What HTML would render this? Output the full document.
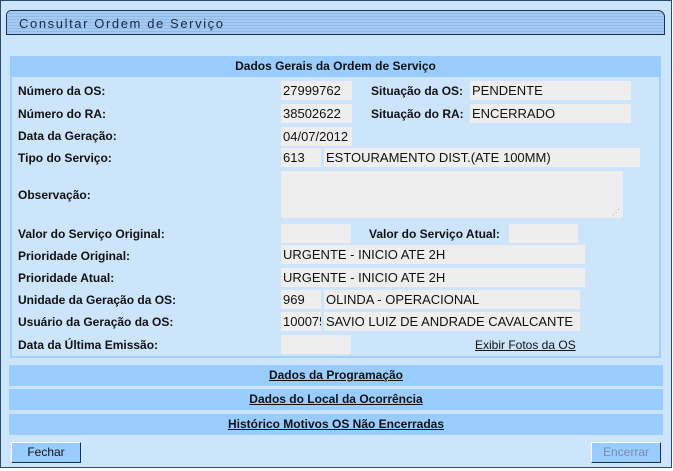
<!DOCTYPE html>
<html><head><meta charset="utf-8"><style>
*{margin:0;padding:0;box-sizing:border-box}
body{width:673px;height:471px;background:#fff;font-family:"Liberation Sans",Arial,sans-serif;position:relative;overflow:hidden}
.outer{position:absolute;left:0;top:0;width:672px;height:468px;background:#cce5fb;border:1px solid #2b4a6f}
.title{position:absolute;left:6px;top:10px;width:659px;height:25px;border:1px solid #1d2f4a;border-radius:5px 7px 0 0;
background:repeating-linear-gradient(#a6cbf2 0px,#a6cbf2 2px,#8fb9e8 2px,#8fb9e8 3px);}
.title span{position:absolute;left:12px;top:5px;font-size:13px;letter-spacing:1.6px;color:#1a2a40}
.sec{position:absolute;left:10px;top:56px;width:651px;height:302px;border:2px solid #a3d0fb;border-top:none}
.hdr{position:absolute;left:10px;top:56px;width:651px;height:21px;background:#99ccff;text-align:center;font-size:12px;font-weight:bold;line-height:21px;color:#111}
.l{position:absolute;left:18px;font-size:12px;font-weight:bold;color:#111;white-space:nowrap}
.b{position:absolute;background:#eeeeee;font-size:13px;color:#111;line-height:19px;padding-left:2px;white-space:nowrap;overflow:hidden;height:19px}
.bar{position:absolute;left:9px;width:654px;height:21px;background:#99ccff;text-align:center;font-size:12px;font-weight:bold;line-height:21px;text-decoration:underline;color:#111}
.btn{position:absolute;top:442px;height:21px;background:#99ccff;border:1px solid;border-color:#fff #1d2f4a #1d2f4a #fff;font-size:12px;text-align:center;line-height:19px}
</style></head><body>
<div class="outer"></div>
<div class="title"><span>Consultar Ordem de Serviço</span></div>
<div class="sec"></div>
<div class="hdr">Dados Gerais da Ordem de Serviço</div>

<div class="l" style="top:84px">Número da OS:</div>
<div class="b" style="left:281px;top:81px;width:71px">27999762</div>
<div class="l" style="left:371px;top:84px">Situação da OS:</div>
<div class="b" style="left:470px;top:81px;width:161px">PENDENTE</div>

<div class="l" style="top:107px">Número do RA:</div>
<div class="b" style="left:281px;top:104px;width:71px">38502622</div>
<div class="l" style="left:371px;top:107px">Situação do RA:</div>
<div class="b" style="left:470px;top:104px;width:161px">ENCERRADO</div>

<div class="l" style="top:129px">Data da Geração:</div>
<div class="b" style="left:281px;top:127px;width:71px">04/07/2012</div>

<div class="l" style="top:151px">Tipo do Serviço:</div>
<div class="b" style="left:281px;top:148px;width:40px">613</div>
<div class="b" style="left:324px;top:148px;width:316px">ESTOURAMENTO DIST.(ATE 100MM)</div>

<div class="l" style="top:188px">Observação:</div>
<div class="b" style="left:281px;top:171px;width:342px;height:47px"><span style="position:absolute;right:3px;bottom:1px;font-size:8px;color:#999;line-height:8px">⋰</span></div>

<div class="l" style="top:227px">Valor do Serviço Original:</div>
<div class="b" style="left:281px;top:224px;width:70px"></div>
<div class="l" style="left:369px;top:227px">Valor do Serviço Atual:</div>
<div class="b" style="left:509px;top:224px;width:69px"></div>

<div class="l" style="top:249px">Prioridade Original:</div>
<div class="b" style="left:281px;top:245px;width:304px">URGENTE - INICIO ATE 2H</div>
<div class="l" style="top:271px">Prioridade Atual:</div>
<div class="b" style="left:281px;top:268px;width:304px">URGENTE - INICIO ATE 2H</div>

<div class="l" style="top:293px">Unidade da Geração da OS:</div>
<div class="b" style="left:281px;top:290px;width:40px">969</div>
<div class="b" style="left:324px;top:290px;width:256px">OLINDA - OPERACIONAL</div>

<div class="l" style="top:315px">Usuário da Geração da OS:</div>
<div class="b" style="left:281px;top:312px;width:40px">100075</div>
<div class="b" style="left:324px;top:312px;width:256px">SAVIO LUIZ DE ANDRADE CAVALCANTE</div>

<div class="l" style="top:338px">Data da Última Emissão:</div>
<div class="b" style="left:281px;top:335px;width:70px"></div>
<div style="position:absolute;left:475px;top:338px;font-size:12px;text-decoration:underline;color:#111">Exibir Fotos da OS</div>

<div class="bar" style="top:365px">Dados da Programação</div>
<div class="bar" style="top:389px">Dados do Local da Ocorrência</div>
<div class="bar" style="top:414px">Histórico Motivos OS Não Encerradas</div>

<div class="btn" style="left:11px;width:70px;color:#111">Fechar</div>
<div class="btn" style="left:591px;width:70px;color:#7a8ea8">Encerrar</div>
</body></html>
